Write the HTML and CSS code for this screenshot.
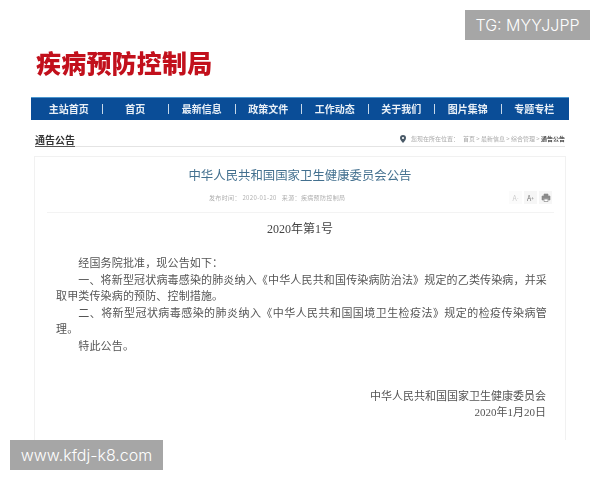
FILE: index.html
```html
<!DOCTYPE html>
<html lang="zh-CN">
<head>
    <meta charset="UTF-8">
    <title>疾病预防控制局 通告公告</title>
    <link rel="stylesheet" href="styles.css">
</head>
<body>
    <div class="page">
        <div class="logo">疾病预防控制局</div>

        <nav class="nav">
            <a>主站首页</a>
            <a>首页</a>
            <a>最新信息</a>
            <a>政策文件</a>
            <a>工作动态</a>
            <a>关于我们</a>
            <a>图片集锦</a>
            <a>专题专栏</a>
        </nav>

        <div class="section-head">
            <span class="section-title">通告公告</span>
            <div class="crumbs">
                <svg class="pin" width="6" height="8" viewBox="0 0 6 8">
                    <path d="M3 0a3 3 0 0 1 3 3c0 2-3 5-3 5S0 5 0 3a3 3 0 0 1 3-3z" fill="#4a5a68"/>
                    <circle cx="3" cy="3" r="1.1" fill="#fff"/>
                </svg>
                <span>您现在所在位置：</span>
                <span>首页 &gt; 最新信息 &gt; 综合管理 &gt; <b>通告公告</b></span>
            </div>
        </div>

        <div class="card">
            <h1>中华人民共和国国家卫生健康委员会公告</h1>
            <div class="meta">
                <span>发布时间： 2020-01-20&nbsp;&nbsp; 来源：疾病预防控制局</span>
                <div class="tools">
                    <span class="tool tool-light">A<sup>-</sup></span>
                    <span class="tool">A<sup>+</sup></span>
                    <span class="tool">
                        <svg width="10" height="9" viewBox="0 0 10 9">
                            <path d="M3 3V1h4v2M1 3h8v4H7.500V5.500h-5V7H1z" fill="#8b8b8b" stroke="#8b8b8b" stroke-width=".6"/>
                            <path d="M3 6h4v2.500H3z" fill="#fff" stroke="#8b8b8b" stroke-width=".7"/>
                        </svg>
                    </span>
                </div>
            </div>

            <div class="doc-no">2020年第1号</div>

            <div class="doc">
                <p>经国务院批准，现公告如下：</p>
                <p>一、将新型冠状病毒感染的肺炎纳入《中华人民共和国传染病防治法》规定的乙类传染病，并采取甲类传染病的预防、控制措施。</p>
                <p>二、将新型冠状病毒感染的肺炎纳入《中华人民共和国国境卫生检疫法》规定的检疫传染病管理。</p>
                <p>特此公告。</p>
            </div>

            <div class="sign">
                <div>中华人民共和国国家卫生健康委员会</div>
                <div>2020年1月20日</div>
            </div>
        </div>
    </div>

    <div class="mark mark-top">TG: MYYJJPP</div>
    <div class="mark mark-bottom">www.kfdj-k8.com</div>
</body>
</html>
```

FILE: styles.css
```css
html, body {
    margin: 0;
    height: 480px;
    overflow: hidden;
    background: #fff;
}

body {
    position: relative;
    font-family: "Noto Sans CJK SC", sans-serif;
}

.page {
    height: 440px;
    padding: 0 31px;
    overflow: hidden;
    filter: blur(0.4px);
}

.logo {
    padding: 45px 0 0 5px;
    height: 97px;
    box-sizing: border-box;
    font-size: 25px;
    line-height: 34px;
    letter-spacing: 0.200px;
    font-weight: 900;
    color: #c2101c;
}

.nav {
    display: flex;
    align-items: center;
    height: 23px;
    padding: 0 2px 0 5px;
    background: #0a4d97;
    border-top: 1px solid #4b97cf;
    box-sizing: border-box;
}

.nav a {
    flex: 1;
    height: 10px;
    line-height: 10px;
    font-size: 10px;
    font-weight: 700;
    text-align: center;
    color: #e9f0f7;
}

.nav a + a {
    border-left: 1px solid #c7d9ea;
}

.section-head {
    display: flex;
    justify-content: space-between;
    align-items: flex-end;
    width: 530px;
    height: 27px;
    margin-left: 4px;
    border-bottom: 1px solid #e4e4e4;
    box-sizing: border-box;
}

.section-title {
    font-size: 10px;
    line-height: 12px;
    font-weight: 700;
    color: #333;
    border-bottom: 1px solid #555;
    margin-bottom: -1px;
}

.crumbs {
    display: flex;
    align-items: center;
    gap: 4px;
    height: 15px;
    font-size: 6px;
    color: #aaa;
}

.crumbs b {
    color: #555;
}

.pin {
    margin-right: 1px;
}

.card {
    width: 530px;
    height: 283px;
    margin: 9px 0 0 3px;
    border: 1px solid #f1f1f1;
    border-bottom: none;
}

h1 {
    margin: 0;
    padding-top: 9px;
    font-size: 12.400px;
    line-height: 18px;
    font-weight: 400;
    text-align: center;
    color: #43708f;
}

.meta {
    display: flex;
    align-items: center;
    margin: 5px 11px 0 12px;
    padding: 0 0 6px 162px;
    height: 24px;
    box-sizing: border-box;
    border-bottom: 1px solid #f3f3f3;
    font-size: 6px;
    letter-spacing: 0.350px;
    color: #b0b0b0;
}

.tools {
    display: flex;
    gap: 2px;
    margin-left: auto;
    margin-right: 2px;
}

.tool {
    display: flex;
    align-items: center;
    justify-content: center;
    width: 13px;
    height: 13px;
    background: #f6f6f6;
    font-size: 7px;
    letter-spacing: 0;
    color: #777;
}

.tool-light {
    background: #fbfbfb;
    color: #ccc;
}

.tool sup {
    font-size: 5px;
    line-height: 5px;
}

.doc-no {
    margin-top: 7px;
    font-family: "Liberation Serif", "Noto Sans CJK SC", serif;
    font-size: 12px;
    line-height: 18px;
    text-align: center;
    color: #444;
}

.doc {
    margin: 17px 18px 0 21px;
    font-family: "Liberation Serif", "Noto Sans CJK SC", serif;
    font-size: 11px;
    line-height: 16.600px;
    letter-spacing: 0.150px;
    text-align: justify;
    color: #555;
}

.doc p {
    margin: 0;
    text-indent: 22.300px;
}

.sign {
    margin: 33px 19px 0 0;
    font-family: "Liberation Serif", "Noto Sans CJK SC", serif;
    font-size: 11px;
    line-height: 16.500px;
    text-align: right;
    color: #555;
}

.mark {
    position: absolute;
    height: 30px;
    line-height: 30px;
    text-align: center;
    font-family: Inter, "Liberation Sans", sans-serif;
    font-size: 16px;
    font-weight: 300;
    color: #fff;
    background: #a6a6a6;
}

.mark-top {
    top: 10px;
    left: 465px;
    width: 125px;
}

.mark-bottom {
    top: 440px;
    left: 10px;
    width: 153px;
}
```
